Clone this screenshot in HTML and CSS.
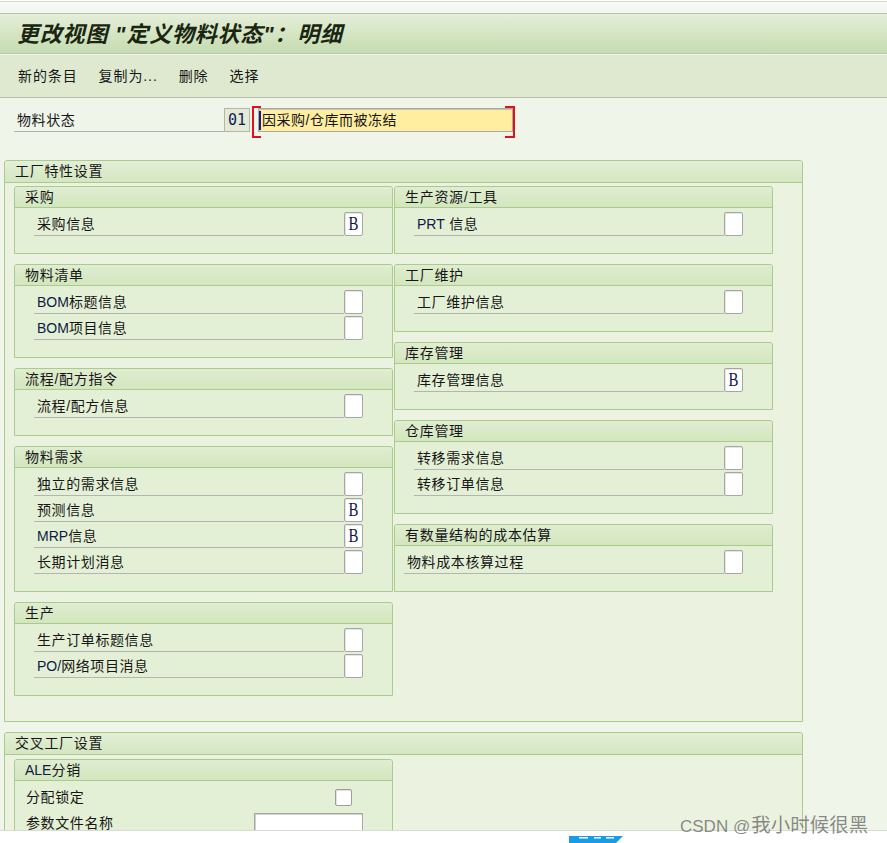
FILE: index.html
```html
<!DOCTYPE html>
<html lang="zh-CN">
<head>
<meta charset="utf-8">
<title>更改视图 "定义物料状态"：明细</title>
<link rel="stylesheet" href="styles.css">
</head>
<body>
<div class="app">
  <div class="topstrip"></div>
  <div class="titlebar">更改视图 &quot;定义物料状态&quot;：明细</div>
  <div class="toolbar">
    <span class="tb">新的条目</span>
    <span class="tb">复制为...</span>
    <span class="tb">删除</span>
    <span class="tb">选择</span>
  </div>
  <div class="content">
    <div class="keyrow">
      <div class="keylabel">物料状态</div>
      <div class="keyval">01</div>
      <div class="req">
        <div class="descinput"><span class="caret"></span>因采购/仓库而被冻结</div>
      </div>
    </div>

    <div class="group">
      <div class="ghead">工厂特性设置</div>
      <div class="gbody">
        <div class="col">
          <div class="box">
            <div class="bhead">采购</div>
            <div class="bbody">
              <div class="row"><div class="lbl">采购信息</div><div class="cb"><span class="bv">B</span></div></div>
            </div>
          </div>
          <div class="box">
            <div class="bhead">物料清单</div>
            <div class="bbody">
              <div class="row"><div class="lbl"><span class="lt">BOM</span>标题信息</div><div class="cb"></div></div>
              <div class="row"><div class="lbl"><span class="lt">BOM</span>项目信息</div><div class="cb"></div></div>
            </div>
          </div>
          <div class="box">
            <div class="bhead">流程/配方指令</div>
            <div class="bbody">
              <div class="row"><div class="lbl">流程/配方信息</div><div class="cb"></div></div>
            </div>
          </div>
          <div class="box">
            <div class="bhead">物料需求</div>
            <div class="bbody">
              <div class="row"><div class="lbl">独立的需求信息</div><div class="cb"></div></div>
              <div class="row"><div class="lbl">预测信息</div><div class="cb"><span class="bv">B</span></div></div>
              <div class="row"><div class="lbl"><span class="lt">MRP</span>信息</div><div class="cb"><span class="bv">B</span></div></div>
              <div class="row"><div class="lbl">长期计划消息</div><div class="cb"></div></div>
            </div>
          </div>
          <div class="box">
            <div class="bhead">生产</div>
            <div class="bbody">
              <div class="row"><div class="lbl">生产订单标题信息</div><div class="cb"></div></div>
              <div class="row"><div class="lbl"><span class="lt">PO/</span>网络项目消息</div><div class="cb"></div></div>
            </div>
          </div>
        </div>
        <div class="col">
          <div class="box">
            <div class="bhead">生产资源/工具</div>
            <div class="bbody">
              <div class="row"><div class="lbl"><span class="lt">PRT</span> 信息</div><div class="cb"></div></div>
            </div>
          </div>
          <div class="box">
            <div class="bhead">工厂维护</div>
            <div class="bbody">
              <div class="row"><div class="lbl">工厂维护信息</div><div class="cb"></div></div>
            </div>
          </div>
          <div class="box">
            <div class="bhead">库存管理</div>
            <div class="bbody">
              <div class="row"><div class="lbl">库存管理信息</div><div class="cb"><span class="bv">B</span></div></div>
            </div>
          </div>
          <div class="box">
            <div class="bhead">仓库管理</div>
            <div class="bbody">
              <div class="row"><div class="lbl">转移需求信息</div><div class="cb"></div></div>
              <div class="row"><div class="lbl">转移订单信息</div><div class="cb"></div></div>
            </div>
          </div>
          <div class="box">
            <div class="bhead">有数量结构的成本估算</div>
            <div class="bbody">
              <div class="row flush"><div class="lbl">物料成本核算过程</div><div class="cb"></div></div>
            </div>
          </div>
        </div>
      </div>
    </div>

    <div class="group cross">
      <div class="ghead">交叉工厂设置</div>
      <div class="gbody gbody-cross">
        <div class="col">
          <div class="box">
            <div class="bhead"><span class="lt">ALE</span>分销</div>
            <div class="bbody ale">
              <div class="arow"><div class="alabel">分配锁定</div><div class="scb"></div></div>
              <div class="arow"><div class="alabel">参数文件名称</div><div class="ainput"></div></div>
            </div>
          </div>
        </div>
      </div>
    </div>
  </div>
</div>
<div class="footer">
  <svg class="saplogo" width="54" height="7" viewBox="0 0 54 7"><polygon points="0,0 54,0 47,7 0,7" fill="#1b9be3"/><rect x="10" y="1" width="9" height="1.5" fill="#ffffff"/><rect x="25" y="1" width="7" height="1.5" fill="#ffffff"/><rect x="37" y="1" width="8" height="1.5" fill="#ffffff"/></svg>
</div>
<div class="watermark"><span class="wm-lat">CSDN @</span><span class="wm-cjk">我小时候很黑</span></div>
</body>
</html>
```

FILE: styles.css
```css
* { box-sizing: border-box; }

body {
  margin: 0;
  font-family: "Liberation Sans", "Noto Sans CJK SC", sans-serif;
  font-size: 14px;
  color: #161616;
  background: #ffffff;
  position: relative;
}

.app {
  height: 830px;
  overflow: hidden;
  background: #f0f5ea;
}

.topstrip {
  height: 13px;
  background: linear-gradient(#ffffff 0 1px, #d4d7d1 1px 2px, #f9fbf7 2px, #f1f5ed 100%);
}

.titlebar {
  height: 41px;
  border-top: 1px solid #b9c1b1;
  border-bottom: 1px solid #bcc4b5;
  background: linear-gradient(#e5eed9, #d3e4c2 55%, #c5dcaf);
  padding: 0 0 4px 17px;
  display: flex;
  align-items: center;
  font-family: "Liberation Sans", "Noto Sans CJK SC", sans-serif;
  font-style: italic;
  font-weight: 700;
  font-size: 22px;
  letter-spacing: 0.8px;
  color: #1a2611;
}

.toolbar {
  height: 44px;
  border-top: 1px solid #f2f6ec;
  border-bottom: 1px solid #b7bfaf;
  background: #dfe9cf;
  display: flex;
  align-items: center;
  padding: 0 0 3px 18px;
  gap: 21px;
}

.tb { letter-spacing: 0.9px; }

.content { padding-top: 8px; }

.keyrow {
  display: flex;
  align-items: flex-start;
  height: 28px;
  margin-left: 14px;
}

.keylabel {
  width: 210px;
  height: 26px;
  border-bottom: 1px solid #b3b3b3;
  padding: 2px 0 0 3px;
  line-height: 24px;
  letter-spacing: 0.6px;
}

.keyval {
  width: 26px;
  height: 24px;
  margin-top: 2px;
  background: #e5e9d6;
  border: 1px solid #b2b6aa;
  font-family: "DejaVu Sans Mono", monospace;
  font-size: 15px;
  line-height: 22px;
  padding-left: 3px;
  color: #0b1f55;
}

.req {
  position: relative;
  width: 263px;
  height: 28px;
  margin-left: 2px;
  padding: 2px 2px 2px 6px;
}

.req::before,
.req::after {
  content: "";
  position: absolute;
  top: 0;
  height: 28px;
  border: 2px solid #e0101c;
}

.req::before { left: 0; width: 7px; border-right: 0; }
.req::after { right: 0; width: 8px; border-left: 0; }

.descinput {
  width: 255px;
  height: 24px;
  background: #ffeea0;
  border: 1px solid #a9a9a9;
  box-shadow: inset 1px 1px 0 #c9c4a4;
  display: flex;
  align-items: center;
  line-height: 22px;
  letter-spacing: 0.5px;
}

.caret {
  width: 2px;
  height: 19px;
  background: #1c1c78;
  margin: 0 1px 0 0;
}

.group {
  margin: 26px 0 0 4px;
  width: 799px;
  border: 1px solid #a9cc8e;
  border-radius: 3px 3px 0 0;
  background: #ebf3e0;
}

.group.cross { margin-top: 10px; }

.ghead {
  height: 22px;
  border-bottom: 1px solid #a9cc8e;
  background: linear-gradient(#e3efd6, #d4e7c0);
  padding-left: 10px;
  line-height: 21px;
  letter-spacing: 0.7px;
  border-radius: 3px 3px 0 0;
}

.gbody {
  display: flex;
  gap: 1px;
  padding: 3px 9px 25px 9px;
}

.gbody-cross { padding-top: 4px; }

.col {
  width: 379px;
  display: flex;
  flex-direction: column;
  gap: 10px;
}

.box {
  border: 1px solid #a9cc8e;
  border-radius: 3px 3px 0 0;
  background: #e4f0d5;
}

.bhead {
  height: 21px;
  border-bottom: 1px solid #a9cc8e;
  background: linear-gradient(#e0edd1, #d3e6be);
  padding-left: 10px;
  line-height: 20px;
  letter-spacing: 0.7px;
  border-radius: 3px 3px 0 0;
}

.bbody {
  padding: 2px 29px 17px 19px;
}

.row {
  display: flex;
  align-items: flex-end;
  height: 26px;
}

.row.flush { margin-left: -10px; }

.lbl {
  flex: 1;
  height: 26px;
  border-bottom: 1px solid #b4b4b4;
  padding: 3px 0 0 3px;
  line-height: 22px;
  letter-spacing: 0.6px;
  white-space: nowrap;
}

.lt { letter-spacing: 0; color: #0d1a45; }

.cb {
  width: 19px;
  height: 24px;
  background: #ffffff;
  border: 1px solid #a6a6a6;
  border-radius: 2px;
  box-shadow: inset 1px 1px 0 #e6e6e6;
  display: flex;
  align-items: center;
  justify-content: center;
}

.bv {
  font-family: "Liberation Serif", serif;
  font-size: 19px;
  line-height: 20px;
  color: #0c1650;
  transform: scaleX(0.78);
}

.ale { padding: 2px 29px 0 11px; }

.arow {
  display: flex;
  align-items: flex-end;
  height: 26px;
}

.alabel {
  flex: 1;
  height: 26px;
  padding-top: 3px;
  line-height: 22px;
  letter-spacing: 0.6px;
}

.scb {
  width: 17px;
  height: 17px;
  margin: 0 11px 3px 0;
  background: #ffffff;
  border: 1px solid #9c9c9c;
  border-radius: 2px;
  box-shadow: inset 1px 1px 0 #e2e2e2;
}

.ainput {
  width: 109px;
  height: 24px;
  background: #ffffff;
  border: 1px solid #a6a6a6;
  box-shadow: inset 1px 1px 0 #d0d0d0;
  margin-bottom: -2px;
}

.footer {
  height: 13px;
  background: #ffffff;
  border-top: 1px solid #d8dcd4;
  padding: 5px 0 0 569px;
  display: flex;
  align-items: flex-start;
}

.saplogo { display: block; }

.watermark {
  position: absolute;
  left: 680px;
  top: 809px;
  color: rgba(95, 95, 95, 0.72);
  white-space: nowrap;
  display: flex;
  align-items: baseline;
}

.wm-lat {
  font-family: "Liberation Sans", sans-serif;
  font-size: 17px;
  margin-right: 1px;
}

.wm-cjk {
  font-family: "Noto Sans CJK SC", sans-serif;
  font-size: 19.5px;
}
```
